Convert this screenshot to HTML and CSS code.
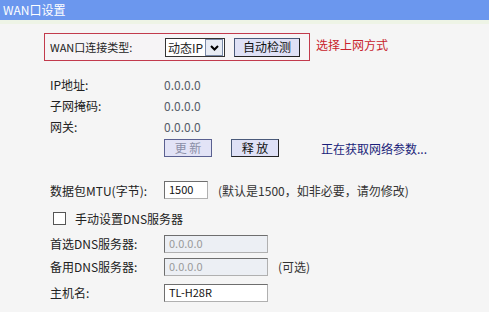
FILE: index.html
```html
<!DOCTYPE html>
<html lang="zh-CN">
<head>
    <meta charset="UTF-8">
    <title>WAN口设置</title>
    <link rel="stylesheet" href="styles.css">
</head>
<body>
    <div class="title-bar">WAN口设置</div>
    <div class="title-line"></div>

    <div class="content">
        <div class="type-row">
            <div class="type-box">
                <span class="type-label">WAN口连接类型:</span>
                <span class="fake-select">
                    <span class="select-text">动态IP</span>
                    <span class="select-arrow">
                        <svg width="13" height="13" viewBox="0 0 13 13">
                            <path d="M3 5 L6.5 8.5 L10 5" fill="none" stroke="#000" stroke-width="2"/>
                        </svg>
                    </span>
                </span>
                <button class="btn btn-detect">自动检测</button>
            </div>
            <span class="hint-red">选择上网方式</span>
        </div>

        <div class="form">
            <div class="row row-info">
                <span class="label">IP地址:</span>
                <span class="value">0.0.0.0</span>
            </div>
            <div class="row row-info">
                <span class="label">子网掩码:</span>
                <span class="value">0.0.0.0</span>
            </div>
            <div class="row row-info">
                <span class="label">网关:</span>
                <span class="value">0.0.0.0</span>
            </div>
            <div class="row row-buttons">
                <span class="label"></span>
                <div class="buttons">
                    <button class="btn btn-small btn-disabled">更 新</button>
                    <button class="btn btn-small">释 放</button>
                    <span class="status">正在获取网络参数...</span>
                </div>
            </div>

            <div class="row row-mtu">
                <span class="label">数据包MTU(字节):</span>
                <div class="field">
                    <span class="input input-mtu">1500</span>
                    <span class="note">(默认是1500，如非必要，请勿修改)</span>
                </div>
            </div>
            <div class="row row-check">
                <span class="checkbox"></span>
                <span class="check-text">手动设置DNS服务器</span>
            </div>
            <div class="row row-input">
                <span class="label">首选DNS服务器:</span>
                <span class="input input-wide input-off">0.0.0.0</span>
            </div>
            <div class="row row-input">
                <span class="label">备用DNS服务器:</span>
                <div class="field">
                    <span class="input input-wide input-off">0.0.0.0</span>
                    <span class="note">(可选)</span>
                </div>
            </div>
            <div class="row row-input row-host">
                <span class="label">主机名:</span>
                <span class="input input-wide">TL-H28R</span>
            </div>
        </div>
    </div>
</body>
</html>
```

FILE: styles.css
```css
body {
    margin: 0;
    background-color: #f5f5f5;
    font-family: "Noto Sans CJK SC", "DejaVu Sans", sans-serif;
    font-size: 12px;
    color: #222;
}

.title-bar {
    height: 20px;
    line-height: 20px;
    padding-left: 3px;
    background-color: #6b97ee;
    color: #fff;
    font-size: 12px;
}

.title-line {
    height: 4px;
    background-color: #eef4e6;
}

.content {
    padding: 9px 0 0 44px;
}

.type-row {
    display: flex;
    align-items: flex-start;
}

.type-box {
    display: flex;
    align-items: center;
    width: 264px;
    height: 26px;
    border: 1px solid #c23a4c;
    background-color: #f6f4f6;
}

.type-label {
    width: 115px;
    padding-left: 5px;
    font-size: 11px;
}

.fake-select {
    display: flex;
    align-items: center;
    height: 17px;
    border: 1px solid #333;
    background-color: #fff;
}

.select-text {
    padding: 0 2px 0 2px;
    line-height: 17px;
}

.select-arrow {
    display: flex;
    align-items: center;
    justify-content: center;
    width: 16px;
    height: 15px;
    margin-right: 1px;
    border: 1px solid #7a8aa8;
    background-color: #e8ecf4;
}

.btn {
    font-family: inherit;
    font-size: 12px;
    color: #111;
    background-color: #dfe1f6;
    border: 1px solid #4a5a7a;
    border-right-color: #222;
    border-bottom-color: #222;
    padding: 0;
    height: 19px;
    line-height: 16px;
}

.btn-detect {
    width: 66px;
    margin-left: 9px;
}

.hint-red {
    color: #c8232c;
    margin: 3px 0 0 6px;
    font-size: 12px;
}

.form {
    padding-top: 13px;
}

.row {
    display: flex;
    align-items: center;
}

.label {
    width: 120px;
    flex-shrink: 0;
    padding-left: 6px;
    box-sizing: border-box;
}

.row-info {
    height: 21px;
}

.value {
    color: #555c6a;
}

.row-buttons {
    height: 24px;
    margin-top: -1px;
}

.buttons {
    display: flex;
    align-items: center;
}

.btn-small {
    width: 48px;
    height: 18px;
    margin-right: 19px;
}

.btn-disabled {
    color: #8a8ea6;
    border-color: #5a6090;
    background-color: #e2e3f6;
}

.status {
    color: #1b1f7a;
    margin-left: 23px;
}

.row-mtu {
    height: 22px;
    margin-top: 19px;
}

.field {
    display: flex;
    align-items: center;
}

.input {
    display: inline-block;
    box-sizing: border-box;
    height: 18px;
    line-height: 15px;
    padding-left: 4px;
    border: 1px solid #6e6e6e;
    border-right-color: #b0b0b0;
    border-bottom-color: #b0b0b0;
    background-color: #fff;
    font-size: 11px;
    color: #111;
}

.input-mtu {
    width: 44px;
}

.note {
    margin-left: 10px;
    color: #333;
}

.row-check {
    height: 24px;
    margin-top: 5px;
}

.checkbox {
    width: 11px;
    height: 11px;
    margin-left: 9px;
    border: 1px solid #555;
    background-color: #fff;
}

.check-text {
    margin-left: 9px;
}

.row-input {
    height: 23px;
}

.row-input:first-of-type {
    margin-top: 0;
}

.row-check + .row-input {
    margin-top: 2px;
}

.input-wide {
    width: 104px;
}

.input-off {
    background-color: #eceff4;
    color: #9a9a9a;
}

.row-host {
    margin-top: 3px;
}
```
